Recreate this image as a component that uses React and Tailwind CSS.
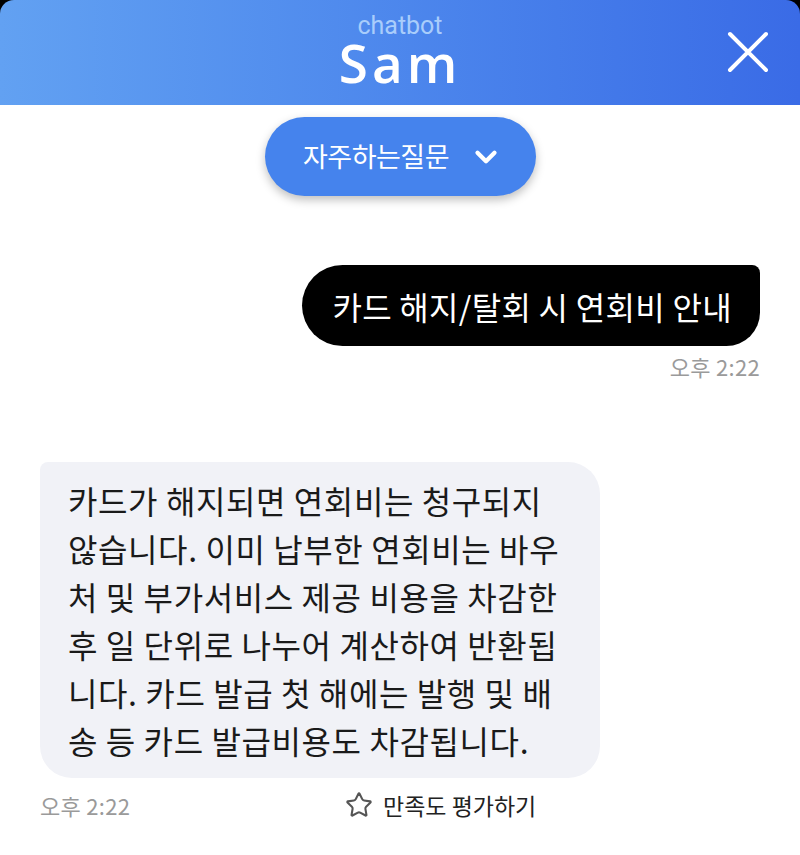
import { ChevronDown, Star } from 'lucide-react'

const KR = { fontFamily: '"Noto Sans CJK KR", "Noto Sans", sans-serif' }

const botLines = [
  '카드가 해지되면 연회비는 청구되지',
  '않습니다. 이미 납부한 연회비는 바우',
  '처 및 부가서비스 제공 비용을 차감한',
  '후 일 단위로 나누어 계산하여 반환됩',
  '니다. 카드 발급 첫 해에는 발행 및 배',
  '송 등 카드 발급비용도 차감됩니다.',
]

export default function App() {
  return (
    <div className="w-[800px] h-[855px] bg-black overflow-hidden" style={KR}>
      {/* Header */}
      <div className="relative h-[105px] rounded-t-[14px] bg-gradient-to-r from-[#62a1f2] to-[#3a6be6] flex flex-col items-center">
        <div className="mt-[14px] text-[25px] leading-[24px] text-[#a9cdfb]" style={{ fontFamily: 'Roboto, sans-serif' }}>chatbot</div>
        <div className="text-[53px] leading-[50px] text-white font-semibold tracking-[4px]" style={{ fontFamily: '"Open Sans", sans-serif' }}>Sam</div>
        <button className="absolute right-[31px] top-[31px]">
          <svg width="42" height="42" viewBox="0 0 42 42" fill="none" stroke="white" strokeWidth="4" strokeLinecap="round">
            <path d="M3 3L39 39M39 3L3 39" />
          </svg>
        </button>
      </div>

      <div className="bg-white h-[750px] flex flex-col">
        {/* FAQ button */}
        <div className="flex justify-center pt-[12px]">
          <div className="w-[271px] h-[79px] rounded-full bg-[#4583ed] shadow-[0_4px_10px_rgba(0,0,0,0.25)] flex items-center justify-center gap-[20px] text-white pl-[6px]">
            <span className="text-[27px] tracking-[-0.5px]">자주하는질문</span>
            <ChevronDown size={34} strokeWidth={3} />
          </div>
        </div>

        {/* User message */}
        <div className="flex flex-col items-end pr-[40px] mt-[69px]">
          <div className="h-[81px] bg-black text-white rounded-l-[41px] rounded-tr-[8px] rounded-br-[34px] flex items-center pl-[30px] pr-[28px] text-[32px] tracking-[0.3px]">
            카드 해지/탈회 시 연회비 안내
          </div>
          <div className="mt-[4px] text-[22px] text-[#9a9a9a] tracking-[0.3px]">오후 2:22</div>
        </div>

        {/* Bot message */}
        <div className="pl-[40px] mt-[79px]">
          <div className="w-[560px] h-[316px] bg-[#f1f2f7] rounded-[32px] rounded-tl-[8px] pl-[28px] pt-[14px] text-[32px] leading-[48px] tracking-[0.6px] text-[#1a1a1a]">
            {botLines.map((l) => (
              <div key={l} className="whitespace-nowrap">{l}</div>
            ))}
          </div>
          <div className="flex items-center mt-[12px] h-[30px]">
            <span className="text-[22px] text-[#9a9a9a] w-[305px] tracking-[0.3px]">오후 2:22</span>
            <Star size={28} strokeWidth={1.8} className="text-[#555]" />
            <span className="ml-[10px] text-[23px] text-[#222]">만족도 평가하기</span>
          </div>
        </div>
      </div>
    </div>
  )
}
